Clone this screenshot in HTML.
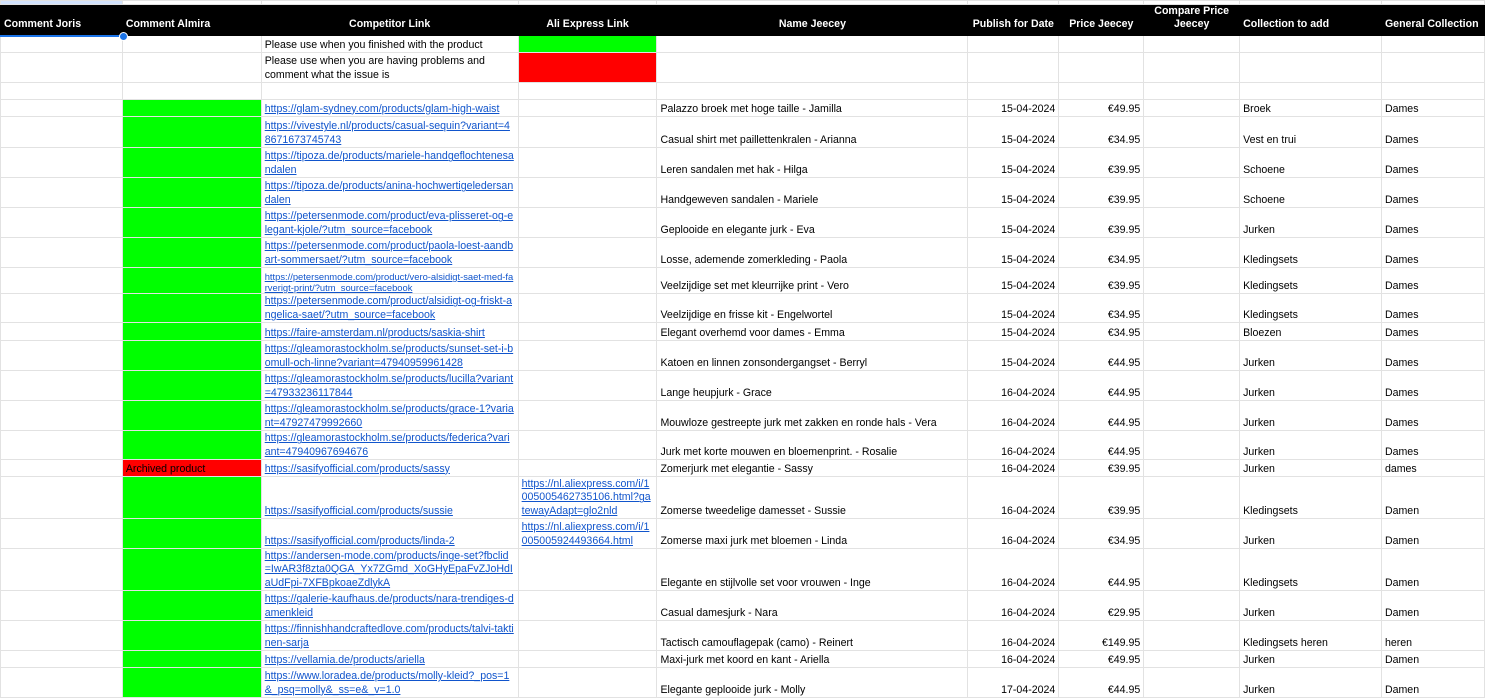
<!DOCTYPE html>
<html><head><meta charset="utf-8"><style>
body{margin:0;background:#fff;width:1485px;height:697px;overflow:hidden;font-family:"Liberation Sans",Arial,sans-serif;font-size:10.6px;color:#000}
table{border-collapse:collapse;table-layout:fixed;position:absolute;left:0;top:0}
td{border:1px solid #e2e2e2;padding:0 3px 0 3px;vertical-align:bottom;line-height:13.3px;overflow:hidden;white-space:nowrap;box-sizing:border-box}
td.w{white-space:normal;word-break:break-all}
tr.h td{background:#000;color:#fff;font-weight:bold;text-align:center;border-color:#000;padding-bottom:4px;line-height:13px}
a{color:#1155cc;text-decoration:underline}
.g{background:#00ff00}.r{background:#ff0000}
.rt{text-align:right}
.sm{font-size:9.4px;line-height:11px}
</style></head><body>
<table>
<colgroup><col style="width:122px"><col style="width:139px"><col style="width:257px"><col style="width:139px"><col style="width:311px"><col style="width:91px"><col style="width:85px"><col style="width:96px"><col style="width:142px"><col style="width:103px"></colgroup>
<tr style="height:4px"><td style="background:#d3e3fd;padding:0"></td><td style="padding:0"></td><td style="padding:0"></td><td style="padding:0"></td><td style="padding:0"></td><td style="padding:0"></td><td style="padding:0"></td><td style="padding:0"></td><td style="padding:0"></td><td style="padding:0"></td></tr>
<tr class="h" style="height:31px"><td style="text-align:left;border-bottom:2px solid #1a73e8">Comment Joris</td><td style="text-align:left">Comment Almira</td><td>Competitor Link</td><td>Ali Express Link</td><td>Name Jeecey</td><td>Publish for Date</td><td>Price Jeecey</td><td style="white-space:normal">Compare Price Jeecey</td><td style="text-align:left">Collection to add</td><td style="text-align:left">General Collection</td></tr>
<tr style="height:17px"><td></td><td></td><td>Please use when you finished with the product</td><td class="g"></td><td></td><td></td><td></td><td></td><td></td><td></td></tr>
<tr style="height:30px"><td></td><td></td><td style="white-space:normal">Please use when you are having problems and comment what the issue is</td><td class="r"></td><td></td><td></td><td></td><td></td><td></td><td></td></tr>
<tr style="height:17px"><td></td><td></td><td></td><td></td><td></td><td></td><td></td><td></td><td></td><td></td></tr>
<tr style="height:17px"><td></td><td class="g"></td><td><a>https://glam-sydney.com/products/glam-high-waist</a></td><td></td><td>Palazzo broek met hoge taille - Jamilla</td><td class="rt">15-04-2024</td><td class="rt">€49.95</td><td></td><td>Broek</td><td>Dames</td></tr>
<tr style="height:31px"><td></td><td class="g"></td><td class="w"><a>https://vivestyle.nl/products/casual-sequin?variant=48671673745743</a></td><td></td><td>Casual shirt met paillettenkralen - Arianna</td><td class="rt">15-04-2024</td><td class="rt">€34.95</td><td></td><td>Vest en trui</td><td>Dames</td></tr>
<tr style="height:30px"><td></td><td class="g"></td><td class="w"><a>https://tipoza.de/products/mariele-handgeflochtenesandalen</a></td><td></td><td>Leren sandalen met hak - Hilga</td><td class="rt">15-04-2024</td><td class="rt">€39.95</td><td></td><td>Schoene</td><td>Dames</td></tr>
<tr style="height:30px"><td></td><td class="g"></td><td class="w"><a>https://tipoza.de/products/anina-hochwertigeledersandalen</a></td><td></td><td>Handgeweven sandalen - Mariele</td><td class="rt">15-04-2024</td><td class="rt">€39.95</td><td></td><td>Schoene</td><td>Dames</td></tr>
<tr style="height:30px"><td></td><td class="g"></td><td class="w"><a>https://petersenmode.com/product/eva-plisseret-og-elegant-kjole/?utm_source=facebook</a></td><td></td><td>Geplooide en elegante jurk - Eva</td><td class="rt">15-04-2024</td><td class="rt">€39.95</td><td></td><td>Jurken</td><td>Dames</td></tr>
<tr style="height:30px"><td></td><td class="g"></td><td class="w"><a>https://petersenmode.com/product/paola-loest-aandbart-sommersaet/?utm_source=facebook</a></td><td></td><td>Losse, ademende zomerkleding - Paola</td><td class="rt">15-04-2024</td><td class="rt">€34.95</td><td></td><td>Kledingsets</td><td>Dames</td></tr>
<tr style="height:26px"><td></td><td class="g"></td><td class="w sm"><a>https://petersenmode.com/product/vero-alsidigt-saet-med-farverigt-print/?utm_source=facebook</a></td><td></td><td>Veelzijdige set met kleurrijke print - Vero</td><td class="rt">15-04-2024</td><td class="rt">€39.95</td><td></td><td>Kledingsets</td><td>Dames</td></tr>
<tr style="height:29px"><td></td><td class="g"></td><td class="w"><a>https://petersenmode.com/product/alsidigt-og-friskt-angelica-saet/?utm_source=facebook</a></td><td></td><td>Veelzijdige en frisse kit - Engelwortel</td><td class="rt">15-04-2024</td><td class="rt">€34.95</td><td></td><td>Kledingsets</td><td>Dames</td></tr>
<tr style="height:18px"><td></td><td class="g"></td><td><a>https://faire-amsterdam.nl/products/saskia-shirt</a></td><td></td><td>Elegant overhemd voor dames - Emma</td><td class="rt">15-04-2024</td><td class="rt">€34.95</td><td></td><td>Bloezen</td><td>Dames</td></tr>
<tr style="height:30px"><td></td><td class="g"></td><td class="w"><a>https://gleamorastockholm.se/products/sunset-set-i-bomull-och-linne?variant=47940959961428</a></td><td></td><td>Katoen en linnen zonsondergangset - Berryl</td><td class="rt">15-04-2024</td><td class="rt">€44.95</td><td></td><td>Jurken</td><td>Dames</td></tr>
<tr style="height:30px"><td></td><td class="g"></td><td class="w"><a>https://gleamorastockholm.se/products/lucilla?variant=47933236117844</a></td><td></td><td>Lange heupjurk - Grace</td><td class="rt">16-04-2024</td><td class="rt">€44.95</td><td></td><td>Jurken</td><td>Dames</td></tr>
<tr style="height:30px"><td></td><td class="g"></td><td class="w"><a>https://gleamorastockholm.se/products/grace-1?variant=47927479992660</a></td><td></td><td>Mouwloze gestreepte jurk met zakken en ronde hals - Vera</td><td class="rt">16-04-2024</td><td class="rt">€44.95</td><td></td><td>Jurken</td><td>Dames</td></tr>
<tr style="height:29px"><td></td><td class="g"></td><td class="w"><a>https://gleamorastockholm.se/products/federica?variant=47940967694676</a></td><td></td><td>Jurk met korte mouwen en bloemenprint. - Rosalie</td><td class="rt">16-04-2024</td><td class="rt">€44.95</td><td></td><td>Jurken</td><td>Dames</td></tr>
<tr style="height:17px"><td></td><td class="r">Archived product</td><td><a>https://sasifyofficial.com/products/sassy</a></td><td></td><td>Zomerjurk met elegantie - Sassy</td><td class="rt">16-04-2024</td><td class="rt">€39.95</td><td></td><td>Jurken</td><td>dames</td></tr>
<tr style="height:42px"><td></td><td class="g"></td><td><a>https://sasifyofficial.com/products/sussie</a></td><td class="w"><a>https://nl.aliexpress.com/i/1005005462735106.html?gatewayAdapt=glo2nld</a></td><td>Zomerse tweedelige damesset - Sussie</td><td class="rt">16-04-2024</td><td class="rt">€39.95</td><td></td><td>Kledingsets</td><td>Damen</td></tr>
<tr style="height:30px"><td></td><td class="g"></td><td><a>https://sasifyofficial.com/products/linda-2</a></td><td class="w"><a>https://nl.aliexpress.com/i/1005005924493664.html</a></td><td>Zomerse maxi jurk met bloemen - Linda</td><td class="rt">16-04-2024</td><td class="rt">€34.95</td><td></td><td>Jurken</td><td>Damen</td></tr>
<tr style="height:42px"><td></td><td class="g"></td><td class="w"><a>https://andersen-mode.com/products/inge-set?fbclid=IwAR3f8zta0QGA_Yx7ZGmd_XoGHyEpaFvZJoHdIaUdFpi-7XFBpkoaeZdlykA</a></td><td></td><td>Elegante en stijlvolle set voor vrouwen - Inge</td><td class="rt">16-04-2024</td><td class="rt">€44.95</td><td></td><td>Kledingsets</td><td>Damen</td></tr>
<tr style="height:30px"><td></td><td class="g"></td><td class="w"><a>https://galerie-kaufhaus.de/products/nara-trendiges-damenkleid</a></td><td></td><td>Casual damesjurk - Nara</td><td class="rt">16-04-2024</td><td class="rt">€29.95</td><td></td><td>Jurken</td><td>Damen</td></tr>
<tr style="height:30px"><td></td><td class="g"></td><td class="w"><a>https://finnishhandcraftedlove.com/products/talvi-taktinen-sarja</a></td><td></td><td>Tactisch camouflagepak (camo) - Reinert</td><td class="rt">16-04-2024</td><td class="rt">€149.95</td><td></td><td>Kledingsets heren</td><td>heren</td></tr>
<tr style="height:17px"><td></td><td class="g"></td><td><a>https://vellamia.de/products/ariella</a></td><td></td><td>Maxi-jurk met koord en kant - Ariella</td><td class="rt">16-04-2024</td><td class="rt">€49.95</td><td></td><td>Jurken</td><td>Damen</td></tr>
<tr style="height:30px"><td></td><td class="g"></td><td class="w"><a>https://www.loradea.de/products/molly-kleid?_pos=1&amp;_psq=molly&amp;_ss=e&amp;_v=1.0</a></td><td></td><td>Elegante geplooide jurk - Molly</td><td class="rt">17-04-2024</td><td class="rt">€44.95</td><td></td><td>Jurken</td><td>Damen</td></tr>
</table>
<div style="position:absolute;left:119px;top:32px;width:7px;height:7px;border-radius:50%;background:#1a73e8;border:1px solid #fff"></div>
</body></html>
